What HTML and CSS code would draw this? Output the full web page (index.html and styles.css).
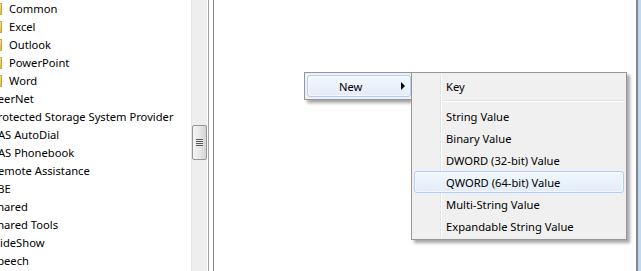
FILE: index.html
```html
<!doctype html>
<html lang="en">
  <head>
    <meta charset="UTF-8" />
    <title>Registry Editor - New</title>
    <link rel="stylesheet" href="styles.css">
  </head>

  <body>
    <div class="window">
      <div class="tree-pane">
        <ul class="tree">
          <li class="child"><span class="folder"></span>Common</li>
          <li class="child"><span class="folder"></span>Excel</li>
          <li class="child"><span class="folder"></span>Outlook</li>
          <li class="child"><span class="folder"></span>PowerPoint</li>
          <li class="child"><span class="folder"></span>Word</li>
          <li class="parent">PeerNet</li>
          <li class="parent">Protected Storage System Provider</li>
          <li class="parent">RAS AutoDial</li>
          <li class="parent">RAS Phonebook</li>
          <li class="parent">Remote Assistance</li>
          <li class="parent">SBE</li>
          <li class="parent">Shared</li>
          <li class="parent">Shared Tools</li>
          <li class="parent">SlideShow</li>
          <li class="parent">Speech</li>
        </ul>
      </div>
      <div class="scrollbar">
        <div class="thumb"><span class="grip"></span></div>
      </div>
      <div class="splitter"></div>
      <div class="values-pane"></div>
      <div class="frame-edge"></div>
    </div>

    <!-- context menu: New > -->
    <div class="menu menu-new">
      <div class="menu-item active">
        <span class="label">New</span>
        <span class="arrow"></span>
      </div>
    </div>

    <div class="menu menu-sub">
      <div class="menu-item"><span class="label">Key</span></div>
      <div class="menu-separator"></div>
      <div class="menu-item"><span class="label">String Value</span></div>
      <div class="menu-item"><span class="label">Binary Value</span></div>
      <div class="menu-item"><span class="label">DWORD (32-bit) Value</span></div>
      <div class="menu-item active"><span class="label">QWORD (64-bit) Value</span></div>
      <div class="menu-item"><span class="label">Multi-String Value</span></div>
      <div class="menu-item"><span class="label">Expandable String Value</span></div>
    </div>
  </body>
</html>
```

FILE: styles.css
```css
/* General styles */
body {
  margin: 0;
  padding: 0;
  width: 641px;
  height: 271px;
  overflow: hidden;
  background: #ffffff;
  color: #000000;
  font-family: 'Noto Sans', 'Open Sans', sans-serif;
  font-size: 11.2px;
}

.window {
  display: flex;
  height: 271px;
}

/* Tree (left pane) */
.tree-pane {
  width: 191px;
  overflow: hidden;
  background: #ffffff;
}

.tree {
  list-style: none;
  margin: 0;
  padding: 0;
}

.tree li {
  display: flex;
  align-items: center;
  height: 18px;
  line-height: 18px;
  white-space: nowrap;
}

.tree .parent {
  margin-left: -9px;
}

.folder {
  width: 16px;
  height: 12px;
  margin-left: -14px;
  margin-right: 7px;
  border-radius: 1px;
  background: linear-gradient(#f7dd95, #e2b84f);
  box-shadow: inset 0 0 0 1px #c9a13d;
}

/* Scrollbar */
.scrollbar {
  width: 16px;
  background: #eeeeee;
  border-left: 1px solid #e6e6e6;
  box-sizing: border-box;
}

.thumb {
  margin-top: 125px;
  width: 15px;
  height: 35px;
  box-sizing: border-box;
  border: 1px solid #979797;
  border-radius: 2px;
  background: linear-gradient(to right, #f4f4f4, #e8e8e8 50%, #d4d4d4);
  display: flex;
  justify-content: center;
  align-items: center;
}

.grip {
  width: 7px;
  height: 7px;
  background: repeating-linear-gradient(#5a5a5a 0 1px, #e8e8e8 1px 2px);
}

.splitter {
  width: 4px;
  margin-left: 1px;
  border-left: 1px solid #a0a0a0;
  border-right: 1px solid #828790;
  background: #ffffff;
}

.values-pane {
  flex: 1;
  background: #ffffff;
}

.frame-edge {
  width: 3px;
  border-left: 2px solid #7f8790;
  background: #c2d8ee;
}

/* Menus */
.menu {
  position: absolute;
  box-sizing: border-box;
  background: #f0f0f0;
  border: 1px solid #979797;
  padding: 2px;
  box-shadow: 3px 3px 3px rgba(0, 0, 0, 0.35);
}

.menu::before {
  content: '';
  position: absolute;
  top: 2px;
  bottom: 2px;
  left: 28px;
  width: 1px;
  background: #e2e3e3;
  border-right: 1px solid #ffffff;
}

.menu-new {
  left: 304px;
  top: 72px;
  width: 110px;
  z-index: 1;
}

.menu-sub {
  left: 411px;
  top: 72px;
  width: 216px;
  z-index: 2;
}

.menu-item {
  position: relative;
  display: flex;
  align-items: center;
  height: 22px;
  box-sizing: border-box;
  padding-left: 31px;
  border: 1px solid transparent;
  border-radius: 3px;
  white-space: nowrap;
}

.menu-item.active {
  border-color: #aecff7;
  background: linear-gradient(#f2f7fd, #e3ecf9);
  box-shadow: inset 0 0 0 1px rgba(255, 255, 255, 0.6);
}

.arrow {
  margin-left: auto;
  margin-right: 5px;
  width: 0;
  height: 0;
  border-left: 4px solid #000000;
  border-top: 4px solid transparent;
  border-bottom: 4px solid transparent;
}

.menu-separator {
  height: 8px;
  margin-left: 28px;
  position: relative;
}

.menu-separator::after {
  content: '';
  position: absolute;
  left: 2px;
  right: 0;
  top: 3px;
  height: 1px;
  background: #e0e0e0;
  border-bottom: 1px solid #ffffff;
}
```
